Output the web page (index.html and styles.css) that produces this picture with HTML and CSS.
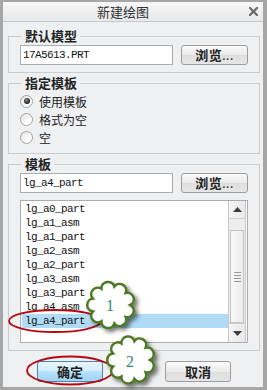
FILE: index.html
```html
<!DOCTYPE html>
<html lang="zh">
<head>
<meta charset="utf-8">
<title>新建绘图</title>
<link rel="stylesheet" href="styles.css">
</head>
<body>
<div class="screen">
  <div class="window">
    <div class="titlebar">
      <span class="title">新建绘图</span>
      <span class="close">
        <svg width="9" height="9" viewBox="0 0 9 9"><path d="M1 1L8 8M8 1L1 8" stroke="#6b6b6b" stroke-width="2.2" stroke-linecap="square"/></svg>
      </span>
    </div>
    <div class="content">
      <fieldset class="group">
        <legend>默认模型</legend>
        <div class="row">
          <div class="field">17A5613.PRT</div>
          <button class="btn browse"><b>浏览</b>...</button>
        </div>
      </fieldset>
      <fieldset class="group">
        <legend>指定模板</legend>
        <div class="radios">
          <label class="radio"><span class="dot checked"></span>使用模板</label>
          <label class="radio"><span class="dot"></span>格式为空</label>
          <label class="radio"><span class="dot"></span>空</label>
        </div>
      </fieldset>
      <fieldset class="group">
        <legend>模板</legend>
        <div class="row">
          <div class="field">lg_a4_part</div>
          <button class="btn browse"><b>浏览</b>...</button>
        </div>
        <div class="listbox">
          <ul class="items">
            <li>lg_a0_part</li>
            <li>lg_a1_asm</li>
            <li>lg_a1_part</li>
            <li>lg_a2_asm</li>
            <li>lg_a2_part</li>
            <li>lg_a3_asm</li>
            <li>lg_a3_part</li>
            <li>lg_a4_asm</li>
            <li class="sel">lg_a4_part</li>
          </ul>
          <div class="scrollbar">
            <div class="arrow up"><svg width="9" height="5" viewBox="0 0 9 5"><path d="M0 5L4.5 0L9 5Z" fill="#3c3c3c"/></svg></div>
            <div class="track">
              <div class="thumb">
                <span class="grip"></span><span class="grip"></span><span class="grip"></span><span class="grip"></span>
              </div>
            </div>
            <div class="arrow down"><svg width="9" height="5" viewBox="0 0 9 5"><path d="M0 0L4.5 5L9 0Z" fill="#3c3c3c"/></svg></div>
          </div>
        </div>
      </fieldset>
      <div class="actions">
        <button class="btn act primary">确定</button>
        <button class="btn act">取消</button>
      </div>
    </div>
  </div>
  <svg class="overlay" width="267" height="390" viewBox="0 0 267 390">
    <defs>
      <path id="cloud" d="M20 0A6.9 6.9 0 0 1 15.32 12.86A6.9 6.9 0 0 1 3.47 19.7A6.9 6.9 0 0 1 -10 17.32A6.9 6.9 0 0 1 -18.79 6.84A6.9 6.9 0 0 1 -18.79 -6.84A6.9 6.9 0 0 1 -10 -17.32A6.9 6.9 0 0 1 3.47 -19.7A6.9 6.9 0 0 1 15.32 -12.86A6.9 6.9 0 0 1 20 0Z"/>
      <filter id="shadow" x="-40%" y="-40%" width="190%" height="190%">
        <feDropShadow dx="3" dy="3" stdDeviation="2" flood-color="#000" flood-opacity="0.55"/>
      </filter>
    </defs>
    <ellipse cx="55" cy="321" rx="46" ry="11" fill="none" stroke="#b5090f" stroke-width="1.8"/>
    <ellipse cx="70" cy="370.5" rx="43" ry="14" fill="none" stroke="#b5090f" stroke-width="1.8"/>
    <use href="#cloud" transform="translate(111 305) scale(0.96 0.94)" fill="#fff" stroke="#4b7a21" stroke-width="2.7" filter="url(#shadow)"/>
    <use href="#cloud" transform="translate(131 360) scale(0.96 0.96)" fill="#fff" stroke="#4b7a21" stroke-width="2.7" filter="url(#shadow)"/>
    <text x="110" y="311" class="num">1</text>
    <text x="130" y="367" class="num">2</text>
  </svg>
</div>
</body>
</html>
```
FILE: styles.css
```css
body {
  margin: 0;
}

.screen {
  position: relative;
  width: 267px;
  height: 390px;
  font-family: "Noto Sans CJK SC", "Noto Sans", sans-serif;
  color: #222;
}

.window {
  box-sizing: border-box;
  width: 267px;
  height: 390px;
  border-style: solid;
  border-color: #a6a6a6;
  border-width: 2px 4px 3px 3px;
  background: #eef0f2;
  display: flex;
  flex-direction: column;
}

.titlebar {
  height: 19px;
  border-bottom: 1px solid #c6c8ca;
  background: linear-gradient(#f7f7f7, #e8e9ea);
  display: flex;
  align-items: center;
}

.title {
  flex: 1;
  text-align: center;
  font-size: 13px;
  line-height: 19px;
  color: #333;
}

.close {
  width: 20px;
  display: flex;
  justify-content: center;
  align-items: center;
}

.content {
  flex: 1;
  padding: 6px 3px 0 5px;
  display: flex;
  flex-direction: column;
  gap: 2px;
}

.group {
  margin: 0;
  min-width: 0;
  border: 1px solid #c9cdd1;
  padding: 1px 11px 7px 11px;
}

.group legend {
  font-size: 13px;
  font-weight: bold;
  line-height: 16px;
  padding: 0 3px;
  margin-left: 2px;
  color: #222;
}

.row {
  display: flex;
  gap: 8px;
}

.field {
  flex: 1;
  box-sizing: border-box;
  height: 20px;
  border: 1px solid #abadb3;
  background: #fff;
  padding-left: 2px;
  font-family: "Liberation Mono", monospace;
  font-size: 11px;
  letter-spacing: -0.6px;
  line-height: 18px;
  color: #111;
}

.btn {
  box-sizing: border-box;
  margin: 0;
  padding: 0;
  border: 1px solid #9d9d9d;
  border-radius: 3px;
  background: linear-gradient(#fafafa, #ebebeb 50%, #dedede 51%, #e6e6e6);
  font-family: "Noto Sans CJK SC", sans-serif;
  color: #222;
}

.browse {
  width: 67px;
  height: 20px;
  font-size: 12px;
  line-height: 18px;
  letter-spacing: 0.5px;
}

.browse b {
  font-size: 13px;
}

.radios {
  display: flex;
  flex-direction: column;
}

.radio {
  height: 18px;
  display: flex;
  align-items: center;
  gap: 6px;
  font-size: 12px;
  color: #222;
}

.dot {
  box-sizing: border-box;
  width: 13px;
  height: 13px;
  border-radius: 50%;
  border: 1px solid #a3a3a3;
  background: linear-gradient(135deg, #e2e2e2, #ffffff 70%);
  display: flex;
  align-items: center;
  justify-content: center;
}

.dot.checked::after {
  content: "";
  width: 6px;
  height: 6px;
  border-radius: 50%;
  background: radial-gradient(circle at 40% 35%, #8a8a8a, #1c1c1c 70%);
}

.listbox {
  margin-top: 7px;
  box-sizing: border-box;
  height: 143px;
  border: 1px solid #a9abaf;
  background: #fff;
  display: flex;
}

.items {
  flex: 1;
  list-style: none;
  margin: 0;
  padding: 1px 0 0 1px;
}

.items li {
  height: 14px;
  line-height: 14px;
  padding-left: 3px;
  font-family: "Liberation Mono", monospace;
  font-size: 11px;
  letter-spacing: -0.6px;
  color: #111;
}

.items li.sel {
  background: #b0dbf6;
}

.scrollbar {
  width: 16px;
  margin-right: 1px;
  border-left: 1px solid #c8c8c8;
  border-right: 1px solid #c8c8c8;
  background: #ededed;
  display: flex;
  flex-direction: column;
}

.arrow {
  display: flex;
  align-items: center;
  justify-content: center;
  background: linear-gradient(90deg, #f4f4f4, #e9e9e9);
}

.arrow.up {
  height: 17px;
  border-bottom: 1px solid #cfcfcf;
}

.arrow.down {
  height: 18px;
  border-top: 1px solid #cfcfcf;
}

.track {
  flex: 1;
  padding-top: 11px;
}

.thumb {
  box-sizing: border-box;
  height: 93px;
  margin: 0 1px;
  border: 1px solid #c2c2c2;
  background: linear-gradient(90deg, #f9f9f9, #ececec);
  display: flex;
  flex-direction: column;
  align-items: center;
  justify-content: center;
  gap: 2px;
}

.grip {
  width: 7px;
  height: 1px;
  background: #9a9a9a;
}

.actions {
  margin-top: 8px;
  display: flex;
  justify-content: center;
  gap: 62px;
}

.act {
  width: 66px;
  height: 21px;
  font-size: 13px;
  font-weight: bold;
  line-height: 19px;
}

.primary {
  border-color: #4d87b4;
  background: linear-gradient(#e6f5fd, #d5eefc 45%, #b7e2fb 50%, #9fd4f3);
}

.overlay {
  position: absolute;
  left: 0;
  top: 0;
  pointer-events: none;
}

.num {
  font-family: "Liberation Serif", serif;
  font-size: 16px;
  fill: #2b8a66;
  text-anchor: middle;
}
```
